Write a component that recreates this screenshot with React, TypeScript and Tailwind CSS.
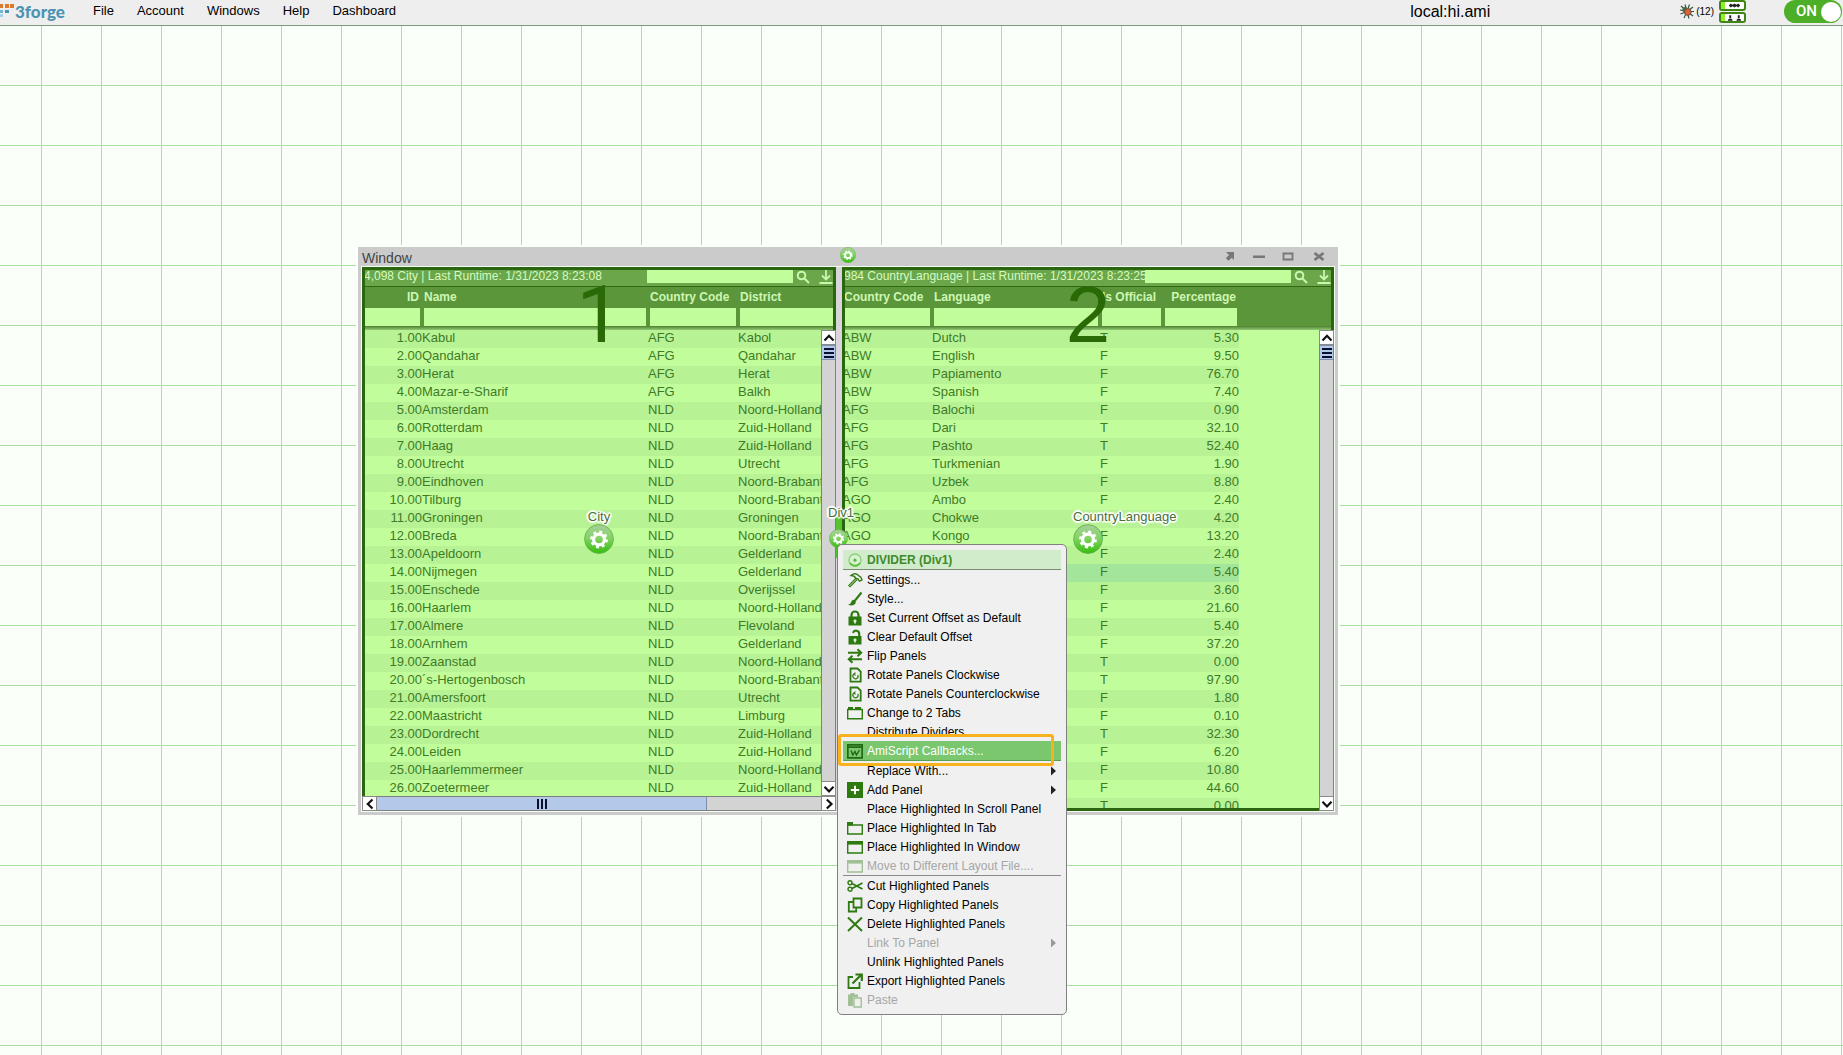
import React from "react";

const FONT = "font-['Liberation_Sans',Arial,sans-serif]";

const cities: [string, string, string, string][] = [
  ["1.00", "Kabul", "AFG", "Kabol"],
  ["2.00", "Qandahar", "AFG", "Qandahar"],
  ["3.00", "Herat", "AFG", "Herat"],
  ["4.00", "Mazar-e-Sharif", "AFG", "Balkh"],
  ["5.00", "Amsterdam", "NLD", "Noord-Holland"],
  ["6.00", "Rotterdam", "NLD", "Zuid-Holland"],
  ["7.00", "Haag", "NLD", "Zuid-Holland"],
  ["8.00", "Utrecht", "NLD", "Utrecht"],
  ["9.00", "Eindhoven", "NLD", "Noord-Brabant"],
  ["10.00", "Tilburg", "NLD", "Noord-Brabant"],
  ["11.00", "Groningen", "NLD", "Groningen"],
  ["12.00", "Breda", "NLD", "Noord-Brabant"],
  ["13.00", "Apeldoorn", "NLD", "Gelderland"],
  ["14.00", "Nijmegen", "NLD", "Gelderland"],
  ["15.00", "Enschede", "NLD", "Overijssel"],
  ["16.00", "Haarlem", "NLD", "Noord-Holland"],
  ["17.00", "Almere", "NLD", "Flevoland"],
  ["18.00", "Arnhem", "NLD", "Gelderland"],
  ["19.00", "Zaanstad", "NLD", "Noord-Holland"],
  ["20.00", "´s-Hertogenbosch", "NLD", "Noord-Brabant"],
  ["21.00", "Amersfoort", "NLD", "Utrecht"],
  ["22.00", "Maastricht", "NLD", "Limburg"],
  ["23.00", "Dordrecht", "NLD", "Zuid-Holland"],
  ["24.00", "Leiden", "NLD", "Zuid-Holland"],
  ["25.00", "Haarlemmermeer", "NLD", "Noord-Holland"],
  ["26.00", "Zoetermeer", "NLD", "Zuid-Holland"],
];

const languages: [string, string, string, string][] = [
  ["ABW", "Dutch", "T", "5.30"],
  ["ABW", "English", "F", "9.50"],
  ["ABW", "Papiamento", "F", "76.70"],
  ["ABW", "Spanish", "F", "7.40"],
  ["AFG", "Balochi", "F", "0.90"],
  ["AFG", "Dari", "T", "32.10"],
  ["AFG", "Pashto", "T", "52.40"],
  ["AFG", "Turkmenian", "F", "1.90"],
  ["AFG", "Uzbek", "F", "8.80"],
  ["AGO", "Ambo", "F", "2.40"],
  ["AGO", "Chokwe", "F", "4.20"],
  ["AGO", "Kongo", "F", "13.20"],
  ["", "", "F", "2.40"],
  ["", "", "F", "5.40"],
  ["", "", "F", "3.60"],
  ["", "", "F", "21.60"],
  ["", "", "F", "5.40"],
  ["", "", "F", "37.20"],
  ["", "", "T", "0.00"],
  ["", "", "T", "97.90"],
  ["", "", "F", "1.80"],
  ["", "", "F", "0.10"],
  ["", "", "T", "32.30"],
  ["", "", "F", "6.20"],
  ["", "", "F", "10.80"],
  ["", "", "F", "44.60"],
  ["", "", "T", "0.00"],
];

function Gear({ size, id }: { size: number; id: string }) {
  return (
    <svg width={size} height={size} viewBox="0 0 30 30" className="block" aria-hidden="true">
      <defs>
        <linearGradient id={id} x1="0" y1="0" x2="0" y2="1">
          <stop offset="0" stopColor="#a8cf9c" />
          <stop offset="0.45" stopColor="#86d468" />
          <stop offset="1" stopColor="#35bd0c" />
        </linearGradient>
      </defs>
      <circle cx="15" cy="15" r="14.4" fill={`url(#${id})`} stroke="#5fae48" strokeWidth="0.8" />
      <circle cx="15" cy="15.5" r="5.4" fill="none" stroke="#fff" strokeWidth="3.2" />
      <circle cx="15" cy="15.5" r="7.6" fill="none" stroke="#fff" strokeWidth="2.6" strokeDasharray="2.9 3.07" />
    </svg>
  );
}

function SearchIcon() {
  return (
    <svg width="14" height="14" viewBox="0 0 14 14" fill="none" stroke="#c9f7ae" strokeWidth="2" aria-hidden="true">
      <circle cx="5.5" cy="5.5" r="3.8" />
      <path d="M8.5 8.5L13 13" />
    </svg>
  );
}

function DownloadIcon() {
  return (
    <svg width="14" height="14" viewBox="0 0 14 14" fill="none" stroke="#c9f7ae" strokeWidth="1.8" aria-hidden="true">
      <path d="M7 0v9M3 5.5L7 9.5L11 5.5M0.5 13h13" />
    </svg>
  );
}

function Arrow({ d }: { d: string }) {
  return (
    <svg width="12" height="12" viewBox="0 0 12 12" fill="none" stroke="#111" strokeWidth="2.2" aria-hidden="true">
      <path d={d} />
    </svg>
  );
}

const scrollBtn = "flex shrink-0 items-center justify-center border border-[#8a8a8a] bg-white h-[15px] w-[15px]";

function VScroll({ name }: { name: string }) {
  return (
    <div className="relative z-20 flex w-[15px] shrink-0 flex-col border-x border-[#7f7f7f] bg-[#d3d3d3]">
      <button aria-label={`Scroll ${name} up`} className={`${scrollBtn} -mx-px`}>
        <Arrow d="M1.5 8.5L6 3.8L10.5 8.5" />
      </button>
      <div className="flex h-[15px] flex-col items-center justify-center gap-[2px] border-y border-[#7f8fb0] bg-[#b4c9ea]">
        <i className="h-[2px] w-[10px] bg-[#0a1030]" />
        <i className="h-[2px] w-[10px] bg-[#0a1030]" />
        <i className="h-[2px] w-[10px] bg-[#0a1030]" />
      </div>
      <button aria-label={`Scroll ${name} down`} className={`${scrollBtn} -mx-px mt-auto`}>
        <Arrow d="M1.5 3.8L6 8.5L10.5 3.8" />
      </button>
    </div>
  );
}

type Col = { label: string; right?: boolean };

function DataPanel({
  name,
  title,
  columns,
  widths,
  rows,
  rightCol,
  selected,
  number,
  filler,
  hscroll,
}: {
  name: string;
  title: string;
  columns: Col[];
  widths: number[];
  rows: string[][];
  rightCol: number;
  selected?: number;
  number: React.ReactNode;
  filler?: boolean;
  hscroll?: boolean;
}) {
  return (
    <section aria-label={name} className="relative flex h-full min-w-0 flex-col overflow-hidden bg-[#c1fd9b]">
      <div className="flex h-5 shrink-0 items-start border-b border-[#2f6a12] bg-[#6ba64b] pt-[3px] pl-0.5 text-[12px] leading-[12px] text-[#d5fbc0]">
        <span className="h-4 min-w-0 flex-1 overflow-hidden whitespace-nowrap">{title}</span>
        <input aria-label={`Search ${name}`} className="h-[13px] w-[146px] shrink-0 bg-[#c1fd9b] outline-none" />
        <button aria-label={`Find in ${name}`} className="ml-[3px] shrink-0">
          <SearchIcon />
        </button>
        <button aria-label={`Download ${name}`} className="mr-[3px] ml-[9px] shrink-0">
          <DownloadIcon />
        </button>
      </div>
      <div className="min-h-0 flex-1 overflow-hidden">
        <table className="w-full table-fixed border-collapse">
          <colgroup>
            {widths.map((w, i) => (
              <col key={i} style={{ width: w }} />
            ))}
            {filler && <col />}
          </colgroup>
          <thead className="bg-[#5c963a]">
            <tr className="h-[21px] text-[12px] leading-[20px] font-bold text-[#cdf7b4]">
              {columns.map((c) => (
                <th
                  key={c.label}
                  className={`p-0 align-top whitespace-nowrap ${c.right ? "pr-[3px] text-right" : "px-0.5 text-left"}`}
                >
                  {c.label}
                </th>
              ))}
              {filler && <th className="p-0" aria-hidden="true" />}
            </tr>
            <tr className="h-[22px] bg-[linear-gradient(to_bottom,transparent_18px,#4c8030_18px,#93c873_22px)]">
              {columns.map((c) => (
                <th key={c.label} className="p-0 px-0.5 align-top">
                  <input
                    aria-label={`Filter ${name} by ${c.label}`}
                    className="block h-[18px] w-full bg-[#c1fd9b] text-[12px] outline-none"
                  />
                </th>
              ))}
              {filler && <th className="p-0" aria-hidden="true" />}
            </tr>
          </thead>
          <tbody className="text-[13px] leading-[16px] text-[#417a27]">
            {rows.map((r, i) => (
              <tr key={i} className="h-[18px]">
                {r.map((v, j) => (
                  <td
                    key={j}
                    className={`h-[18px] overflow-hidden p-0 align-top whitespace-nowrap ${j === rightCol ? "text-right" : "text-left"} ${
                      i === selected ? "bg-[#a3e69b]" : i % 2 === 0 ? "bg-[#b7f395]" : ""
                    }`}
                  >
                    {v}
                  </td>
                ))}
                {filler && <td className="p-0" />}
              </tr>
            ))}
          </tbody>
        </table>
      </div>
      <div className="pointer-events-none absolute inset-0 z-10 border-[3px] border-[#2a6610]" />
      <div className="pointer-events-none absolute inset-x-0 top-[2px] z-10 text-center text-[80px] leading-[92px] text-[#296a06]">
        {number}
      </div>
      <div className={`absolute top-[63px] right-0 z-20 flex ${hscroll ? "bottom-[15px]" : "bottom-0"}`}>
        <VScroll name={name} />
      </div>
      {hscroll && (
        <div className="absolute inset-x-0 bottom-0 z-20 flex h-[15px] border-y border-[#7f7f7f] bg-[#d3d3d3]">
          <button aria-label={`Scroll ${name} left`} className={`${scrollBtn} -my-px`}>
            <Arrow d="M8.5 1.5L3.8 6L8.5 10.5" />
          </button>
          <div className="flex w-[330px] items-center justify-center gap-[2px] border-r border-[#7f8fb0] bg-[#b4c9ea]">
            <i className="h-[10px] w-[2px] bg-[#0a1030]" />
            <i className="h-[10px] w-[2px] bg-[#0a1030]" />
            <i className="h-[10px] w-[2px] bg-[#0a1030]" />
          </div>
          <button aria-label={`Scroll ${name} right`} className={`${scrollBtn} -my-px ml-auto`}>
            <Arrow d="M3.8 1.5L8.5 6L3.8 10.5" />
          </button>
        </div>
      )}
    </section>
  );
}

const G = "#2d7a10";
const svgProps = { width: 16, height: 16, viewBox: "0 0 16 16", fill: "none", stroke: G, strokeWidth: 1.4 } as const;

const icons: Record<string, React.ReactNode> = {
  hammer: (
    <svg {...svgProps}>
      <path d="M2 14.5L9.5 7" strokeWidth="3" />
      <path d="M2.3 14.2L9.3 7.2" stroke="#f0f0f0" strokeWidth="0.8" />
      <path d="M4 3.5C6.5 1.5 9.5 1.5 11.5 3.5L13.8 5.2L15 8L12.5 9.2L10.8 6.8L8.5 6.2C8 4.5 6.5 3.6 4 3.5Z" />
    </svg>
  ),
  brush: (
    <svg {...svgProps}>
      <path d="M14.5 1.5L8 9.5" strokeWidth="2" />
      <path d="M7.8 9C9 10 9.2 11.5 8.2 12.8C6.5 15 3 14.8 1 13.6C3 13.3 3.6 12.4 4.2 11C5 9.2 6.6 8.3 7.8 9Z" fill={G} stroke="none" />
    </svg>
  ),
  lock: (
    <svg {...svgProps}>
      <path d="M4.5 7V5a3.5 3.5 0 0 1 7 0v2" strokeWidth="2.2" />
      <rect x="1.5" y="6.5" width="13" height="9" fill={G} stroke="none" />
      <path d="M6.5 11h3M8 9.5v4" stroke="#e6f5e0" strokeWidth="1.6" />
    </svg>
  ),
  unlock: (
    <svg {...svgProps}>
      <path d="M6 3.8A3.2 3.2 0 0 1 12.2 5v2.5" strokeWidth="2.2" />
      <rect x="1.5" y="7" width="13" height="8.5" fill={G} stroke="none" />
      <path d="M6.5 11h3M8 9.5v4" stroke="#e6f5e0" strokeWidth="1.6" />
    </svg>
  ),
  flip: (
    <svg {...svgProps} strokeWidth={2}>
      <path d="M1 4.8h13M10.5 1.3L14.2 4.8L10.5 8.2M15 11.2H2M5.5 7.8L1.8 11.2L5.5 14.7" />
    </svg>
  ),
  rotate: (
    <svg {...svgProps}>
      <path d="M3.5 1.5h7l3.2 3.2v10H3.5z" strokeWidth="1.8" />
      <path d="M7 7A2.6 2.6 0 1 0 10.8 8M8.6 5.6L6.8 7L8.6 8.4" strokeWidth="1.2" />
    </svg>
  ),
  tabs: (
    <svg {...svgProps}>
      <path d="M0.7 4.5h14.6v9.3H0.7z" />
      <path d="M1 2h5v3H1zM8 2h6v3H8z" fill={G} stroke="none" />
    </svg>
  ),
  script: (
    <svg {...svgProps} stroke="#1f6a12">
      <path d="M0.8 1.8h14.4v13H0.8zM0.8 4.2h14.4" strokeWidth="1.8" />
      <path d="M4 7.5L5.8 12L8 8.5L9.4 12L12.5 7" />
    </svg>
  ),
  add: (
    <svg {...svgProps}>
      <path d="M0 0h16v16H0z" fill={G} stroke="none" />
      <path d="M8 3.8v8.4M3.8 8h8.4" stroke="#fff" strokeWidth="2" />
    </svg>
  ),
  tab: (
    <svg {...svgProps}>
      <path d="M0.7 5h14.6v9H0.7z" />
      <path d="M0 2h6v3.5H0z" fill={G} stroke="none" />
    </svg>
  ),
  window: (
    <svg {...svgProps}>
      <path d="M0.7 3h14.6v11H0.7z" />
      <path d="M0 2h16v3.6H0z" fill={G} stroke="none" />
    </svg>
  ),
  cut: (
    <svg {...svgProps}>
      <path d="M5 5.6L15.5 11M5 10.4L15.5 5" strokeWidth="1.7" />
      <circle cx="3" cy="4.8" r="2" />
      <circle cx="3" cy="11.2" r="2" />
    </svg>
  ),
  copy: (
    <svg {...svgProps} strokeWidth={1.8}>
      <path d="M6.5 1.5h8v9h-8z" />
      <path d="M6 5H1.8v9.5h7.4V11" />
    </svg>
  ),
  delete: (
    <svg {...svgProps} strokeWidth={2}>
      <path d="M1 1.5L15 15M15 1.5L1 15" />
    </svg>
  ),
  export: (
    <svg {...svgProps} strokeWidth={1.8}>
      <path d="M6 4H1.5v11h11V9" />
      <path d="M5.5 10.5L13.5 2.5M8.5 1.5H14.8V8" strokeWidth="2.2" />
    </svg>
  ),
  paste: (
    <svg {...svgProps}>
      <path d="M1 2.5h2.5V1h4v1.5H11V5H6v9H1z" fill={G} stroke="none" />
      <path d="M7 6h7.2v9H7z" />
    </svg>
  ),
};

type Item = { label: string; icon?: string; sub?: boolean; disabled?: boolean; active?: boolean; rule?: boolean };

const menuItems: Item[] = [
  { label: "Settings...", icon: "hammer" },
  { label: "Style...", icon: "brush" },
  { label: "Set Current Offset as Default", icon: "lock" },
  { label: "Clear Default Offset", icon: "unlock" },
  { label: "Flip Panels", icon: "flip" },
  { label: "Rotate Panels Clockwise", icon: "rotate" },
  { label: "Rotate Panels Counterclockwise", icon: "rotate" },
  { label: "Change to 2 Tabs", icon: "tabs" },
  { label: "Distribute Dividers" },
  { label: "AmiScript Callbacks...", icon: "script", active: true },
  { label: "Replace With...", sub: true },
  { label: "Add Panel", icon: "add", sub: true },
  { label: "Place Highlighted In Scroll Panel" },
  { label: "Place Highlighted In Tab", icon: "tab" },
  { label: "Place Highlighted In Window", icon: "window" },
  { label: "Move to Different Layout File....", icon: "window", disabled: true, rule: true },
  { label: "Cut Highlighted Panels", icon: "cut" },
  { label: "Copy Highlighted Panels", icon: "copy" },
  { label: "Delete Highlighted Panels", icon: "delete" },
  { label: "Link To Panel", sub: true, disabled: true },
  { label: "Unlink Highlighted Panels" },
  { label: "Export Highlighted Panels", icon: "export" },
  { label: "Paste", icon: "paste", disabled: true },
];

function ContextMenu() {
  return (
    <div
      role="menu"
      aria-label="Divider menu"
      className="absolute top-[518px] left-[837px] z-40 w-[230px] rounded-[5px] border border-[#808080] bg-[#f0f0f0] p-[5px] text-[12px] text-black"
    >
      <div className="flex h-5 items-center gap-1 border-b border-[#7a8a75] bg-[#d1ecca] pl-1 font-bold text-[#3f8a2c]">
        <svg width="16" height="16" viewBox="0 0 16 16" aria-hidden="true">
          <circle cx="8" cy="8" r="6" fill="#d8f3cf" stroke="#8fd07c" strokeWidth="1.4" />
          <path d="M3 11a6 6 0 0 0 10 0" fill="none" stroke="#5cc33c" strokeWidth="1.8" />
          <circle cx="8" cy="8.2" r="1.6" fill="#5fb548" />
        </svg>
        DIVIDER (Div1)
      </div>
      {menuItems.map((m) => (
        <React.Fragment key={m.label}>
          <button
            role="menuitem"
            disabled={m.disabled}
            className={`flex w-full items-center gap-1 pr-[5px] pl-1 text-left ${
              m.active ? "h-5 border-b border-[#5aa050] bg-[#7bc76e] text-white" : m.disabled ? "h-[19px] text-[#a6a6a6]" : "h-[19px]"
            }`}
          >
            <span className={`h-4 w-4 shrink-0 ${m.disabled ? "opacity-40" : ""}`} aria-hidden="true">
              {m.icon && icons[m.icon]}
            </span>
            <span className="flex-1 whitespace-nowrap">{m.label}</span>
            {m.sub && (
              <svg width="5" height="10" viewBox="0 0 5 10" aria-hidden="true">
                <path d="M0 0.5L5 5L0 9.5z" fill={m.disabled ? "#999" : "#222"} />
              </svg>
            )}
          </button>
          {m.rule && <hr className="h-px border-0 bg-[#8a8a8a]" />}
        </React.Fragment>
      ))}
      <div className="pointer-events-none absolute top-[189px] left-0 h-[32px] w-[216px] rounded-[3px] border-[3px] border-[#f8b31c]" />
    </div>
  );
}

const halo =
  "[text-shadow:-2px_0_1px_#fff,2px_0_1px_#fff,0_-2px_1px_#fff,0_2px_1px_#fff,-1px_-1px_1px_#fff,1px_1px_1px_#fff,-1px_1px_1px_#fff,1px_-1px_1px_#fff] text-[13px] leading-4 text-[#47703a] whitespace-nowrap";

function TopBar() {
  return (
    <header className="flex h-[26px] items-center border-b border-[#7d9a7d] bg-[#eeeeee] text-[13px] text-black">
      <a href="#home" aria-label="3forge" className="flex h-full w-[89px] shrink-0 items-start text-[#4b93b3]">
        <svg width="15" height="20" viewBox="0 0 15 20" aria-hidden="true">
          <path d="M0 4h3v4H0zM5 4h4v4H5zM10 4h4v4h-4z" fill="#df7a2c" />
          <path d="M5 10h4v3H5z" fill="#4b93b3" />
          <path d="M0 10h3v3H0z" fill="#6fb4d2" />
          <path d="M0 14h3v3H0z" fill="#a6d4e6" />
        </svg>
        <span className="font-['Lato',sans-serif] text-[17px] leading-[23px] font-black">3forge</span>
      </a>
      <nav className="flex h-full items-start gap-[15px] leading-[21px]">
        {["File", "Account", "Windows", "Help", "Dashboard"].map((t) => (
          <button key={t} className="px-1">
            {t}
          </button>
        ))}
      </nav>
      <span className="mr-[190px] ml-auto h-full text-[16px] leading-[23px]">local:hi.ami</span>
      <div className="flex h-full items-start">
        <button className="flex items-center gap-0.5 text-[10px] leading-[23px]">
          <svg width="14" height="15" viewBox="0 0 14 15" aria-hidden="true">
            <path
              d="M7 7.5L1 2M7 7.5L5 0.5M7 7.5L9.5 0.5M7 7.5L13 3M7 7.5H14M7 7.5L13 12M7 7.5L9 14.5M7 7.5L4 14M7 7.5L0.5 10M7 7.5L0 6"
              stroke="#33503a"
              strokeWidth="1.1"
            />
            <circle cx="5" cy="5.5" r="2.6" fill="#3f6b45" />
            <circle cx="7.8" cy="8" r="3.4" fill="#d9603a" stroke="#5a4a30" strokeWidth="0.8" />
          </svg>
          (12)
        </button>
        <div className="ml-[5px] flex w-[27px] flex-col gap-px">
          {[
            "M4 3.5L6 1.5L8 2.8L10 1.5L12 2.8L14 1.5L16 3.5L14 5.5L12 4.2L10 5.5L8 4.2L6 5.5z",
            "M3 7a2.5 2.5 0 0 1 5 0zM4.5 1h2v3h-2zM12 7a2.5 2.5 0 0 1 5 0zM13.5 1h2v3h-2z",
          ].map((d) => (
            <div key={d} className="flex h-[11px] rounded-[3px] border-2 border-[#3f8514] bg-white">
              <i className="w-1 shrink-0 bg-[#8ff02a]" />
              <svg width="19" height="7" viewBox="0 0 20 7" aria-hidden="true">
                <path d={d} fill="#222" />
              </svg>
            </div>
          ))}
        </div>
        <button
          role="switch"
          aria-checked="true"
          className="mr-px ml-[38px] flex h-[23px] w-[58px] items-center justify-between rounded-full bg-[#4caf27] pr-px pl-3 font-['Roboto',sans-serif] text-[15px] font-medium text-white"
        >
          ON
          <i className="h-5 w-5 rounded-full bg-white" />
        </button>
      </div>
    </header>
  );
}

export default function App() {
  return (
    <div className={`flex min-h-screen flex-col overflow-hidden ${FONT}`}>
      <TopBar />
      <main className="relative flex-1 bg-[#fbfff9] bg-[linear-gradient(to_right,#a9dfa0_1px,transparent_1px),linear-gradient(to_bottom,#a9dfa0_1px,transparent_1px)] bg-[size:60px_60px] bg-[position:41px_59px]">
        <div className="absolute top-[221px] left-[358px] flex h-[568px] w-[980px] flex-col bg-[#cbcbcb] outline-2 outline-[#fbfffa]">
          <div className="flex h-[19px] shrink-0 items-center pr-[13px] pl-1 text-[14px] leading-[19px] text-[#444]">
            <span className="pt-1">Window</span>
            <div className="ml-auto flex items-center gap-[17px]">
              <button aria-label="Pop out">
                <svg width="12" height="12" viewBox="0 0 12 12" aria-hidden="true">
                  <path d="M2 1h8v8L7.8 6.8L4.5 9.8L1.8 7.2L5 4z" fill="#777" />
                </svg>
              </button>
              <button aria-label="Minimize">
                <svg width="12" height="12" viewBox="0 0 12 12" aria-hidden="true">
                  <path d="M0 4.5h12v2.5H0z" fill="#777" />
                </svg>
              </button>
              <button aria-label="Maximize">
                <svg width="12" height="12" viewBox="0 0 12 12" fill="none" stroke="#777" strokeWidth="1.8" aria-hidden="true">
                  <path d="M1.5 2.5h9v6h-9z" />
                </svg>
              </button>
              <button aria-label="Close" className="ml-0.5">
                <svg width="12" height="12" viewBox="0 0 12 12" stroke="#777" strokeWidth="2.8" aria-hidden="true">
                  <path d="M1.5 2L10.5 9M10.5 2L1.5 9" />
                </svg>
              </button>
            </div>
          </div>
          <div className="mx-[3px] mb-[3px] flex min-h-0 flex-1 border border-[#f3fff0] bg-[#d9d5da]">
            <div className="w-[474px] shrink-0">
              <DataPanel
                name="City"
                title="4,098 City | Last Runtime: 1/31/2023 8:23:08"
                columns={[{ label: "ID", right: true }, { label: "Name" }, { label: "Country Code" }, { label: "District" }]}
                widths={[60, 226, 90, 98]}
                rows={cities}
                rightCol={0}
                number={<span className="font-['Roboto',sans-serif]">1</span>}
                hscroll
              />
            </div>
            <div className="w-[6px] shrink-0" />
            <div className="min-w-0 flex-1">
              <DataPanel
                name="CountryLanguage"
                title="984 CountryLanguage | Last Runtime: 1/31/2023 8:23:25"
                columns={[{ label: "Country Code" }, { label: "Language" }, { label: "Is Official" }, { label: "Percentage", right: true }]}
                widths={[90, 168, 63, 76]}
                rows={languages}
                rightCol={3}
                selected={13}
                number="2"
                filler
              />
            </div>
          </div>
        </div>

        <button aria-label="Window options" className="absolute top-[221px] left-[840px]">
          <Gear size={16} id="gear-window" />
        </button>
        <div className="absolute top-[488px] left-[836px] z-20 h-[44px] w-[6px] bg-[#55c22e]" />
        <div className="absolute top-[483px] left-[584px] z-30 flex w-[30px] flex-col items-center">
          <span className={halo}>City</span>
          <button aria-label="City options" className="-mt-px">
            <Gear size={30} id="gear-city" />
          </button>
        </div>
        <div className="absolute top-[483px] left-[1073px] z-30 flex w-[30px] flex-col items-start">
          <span className={halo}>CountryLanguage</span>
          <button aria-label="CountryLanguage options" className="-mt-px">
            <Gear size={30} id="gear-language" />
          </button>
        </div>
        <div className="absolute top-[479px] left-[828px] z-30 flex flex-col gap-2">
          <span className={halo}>Div1</span>
          <button aria-label="Div1 options" className="ml-px w-[19px]">
            <Gear size={19} id="gear-divider" />
          </button>
        </div>

        <ContextMenu />
      </main>
    </div>
  );
}
